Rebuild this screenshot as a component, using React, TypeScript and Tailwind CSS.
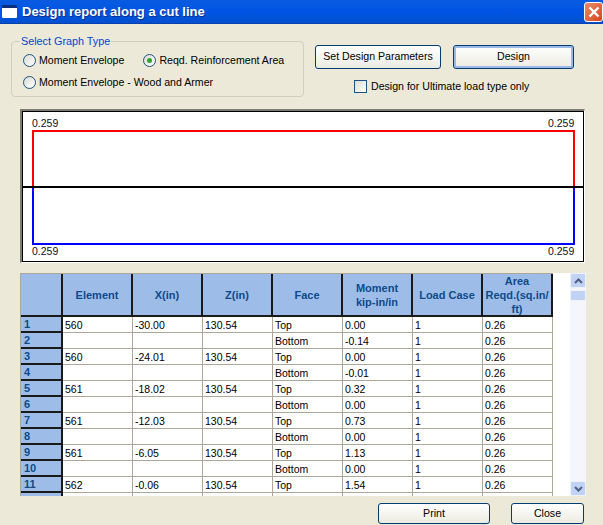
import React from "react";

const rows: [string, string, string, string, string, string, string, string][] = [
  ["1", "560", "-30.00", "130.54", "Top", "0.00", "1", "0.26"],
  ["2", "", "", "", "Bottom", "-0.14", "1", "0.26"],
  ["3", "560", "-24.01", "130.54", "Top", "0.00", "1", "0.26"],
  ["4", "", "", "", "Bottom", "-0.01", "1", "0.26"],
  ["5", "561", "-18.02", "130.54", "Top", "0.32", "1", "0.26"],
  ["6", "", "", "", "Bottom", "0.00", "1", "0.26"],
  ["7", "561", "-12.03", "130.54", "Top", "0.73", "1", "0.26"],
  ["8", "", "", "", "Bottom", "0.00", "1", "0.26"],
  ["9", "561", "-6.05", "130.54", "Top", "1.13", "1", "0.26"],
  ["10", "", "", "", "Bottom", "0.00", "1", "0.26"],
  ["11", "562", "-0.06", "130.54", "Top", "1.54", "1", "0.26"],
  ["", "", "", "", "", "", "", ""],
];

const gridCols = "grid grid-cols-[42px_70px_70px_70px_70px_70px_70px_70px]";

function Radio({ checked, label }: { checked?: boolean; label: string }) {
  return (
    <label className="flex items-center gap-[3px] whitespace-nowrap text-[10.6px] leading-[14px] text-black">
      <span className="flex h-[13px] w-[13px] items-center justify-center rounded-full border border-[#1d5281] bg-gradient-to-br from-[#dcdcd2] to-white">
        {checked && <span className="h-[5px] w-[5px] rounded-full bg-[#2fa52f]" />}
      </span>
      {label}
    </label>
  );
}

function Btn({ label, cls }: { label: string; cls: string }) {
  return (
    <button className={`flex items-center justify-center whitespace-nowrap rounded-[3px] border border-[#003c74] bg-gradient-to-b from-white to-[#ecebe2] text-[10.6px] text-black ${cls}`}>
      {label}
    </button>
  );
}

function Head({ children }: { children?: React.ReactNode }) {
  return (
    <div className="flex h-[43px] items-center justify-center border-r-2 border-b-2 border-[#1a1a1a] bg-[#9dbde8] text-center text-[11px] font-bold leading-[14px] text-[#0f4a8a]">
      {children}
    </div>
  );
}

function Cell({ children }: { children?: React.ReactNode }) {
  return (
    <div className="h-[16px] overflow-hidden border-r border-b border-[#aca899] bg-white pl-[2px] text-[10.5px] leading-[16px] text-black">
      {children}
    </div>
  );
}

function Arrow({ up }: { up?: boolean }) {
  return (
    <div className="flex h-[15px] w-[16px] items-center justify-center rounded-[2px] border border-[#eef3fb] bg-[#c1d2f5]">
      <svg width="9" height="6" viewBox="0 0 9 6">
        <path d={up ? "M1 5 L4.5 1.5 L8 5" : "M1 1 L4.5 4.5 L8 1"} fill="none" stroke="#4d6185" strokeWidth="2" />
      </svg>
    </div>
  );
}

export default function App() {
  return (
    <div className="flex h-[525px] w-[603px] flex-col overflow-hidden bg-[#ece9d8] font-['Liberation_Sans',sans-serif]">
      <div className="flex h-[24px] shrink-0 items-center justify-between border-b border-[#0a3fb0] bg-gradient-to-b from-[#0a5be0] via-[#0054e3] to-[#0250d0] pl-[2px]">
        <div className="flex items-center gap-[5px]">
          <div className="h-[13px] w-[15px] rounded-[1px] border-t-[3px] border-[#0b2f7c] bg-white" />
          <span className="text-[13px] font-bold text-white [text-shadow:1px_1px_0_#0a2f90]">Design report along a cut line</span>
        </div>
        <div className="flex h-[20px] w-[19px] items-center justify-center rounded-[3px] border border-white bg-gradient-to-br from-[#e98a68] to-[#d8431c]">
          <svg width="12" height="12" viewBox="0 0 12 12">
            <path d="M1.5 1.5 L10.5 10.5 M10.5 1.5 L1.5 10.5" stroke="#fff" strokeWidth="2.4" />
          </svg>
        </div>
      </div>

      <div className="flex h-[85px] shrink-0 pl-[11px] pt-[17px]">
        <div className="relative h-[56px] w-[293px] rounded-[4px] border border-[#d0d0bf] pl-[11px] pt-[11px]">
          <span className="absolute left-[8px] top-[-8px] bg-[#ece9d8] px-[1px] text-[10.8px] leading-[14px] text-[#0046d5]">Select Graph Type</span>
          <div className="flex items-center gap-[19px]">
            <Radio label="Moment Envelope" />
            <Radio checked label="Reqd. Reinforcement Area" />
          </div>
          <div className="mt-[8px]">
            <Radio label="Moment Envelope - Wood and Armer" />
          </div>
        </div>
        <div className="ml-[11px] flex flex-col pt-[4px]">
          <div className="flex gap-[12px]">
            <Btn label="Set Design Parameters" cls="h-[24px] w-[126px]" />
            <Btn label="Design" cls="h-[24px] w-[121px] shadow-[inset_0_0_0_2px_#9db8e6]" />
          </div>
          <div className="ml-[39px] mt-[10px] flex items-center gap-[4px] whitespace-nowrap text-[10.6px] leading-[14px] text-black">
            <span className="h-[13px] w-[13px] border border-[#1d5281] bg-gradient-to-br from-[#dcdcd2] to-white" />
            Design for Ultimate load type only
          </div>
        </div>
      </div>

      <div className="ml-[20px] h-[154px] w-[565px] shrink-0 border-t-[2px] border-r border-b border-l-[2px] border-t-[#7f7c70] border-r-white border-b-white border-l-[#7f7c70]">
        <svg width="562" height="151" viewBox="0 0 560 149" className="block border border-black bg-white">
          <text x="9" y="15" fontSize="10.5" fill="#111">0.259</text>
          <text x="525" y="15" fontSize="10.5" fill="#111">0.259</text>
          <rect x="10" y="19" width="541" height="56" fill="none" stroke="#ff0000" strokeWidth="2" />
          <rect x="10" y="75" width="541" height="57" fill="none" stroke="#0000ff" strokeWidth="2" />
          <line x1="0" y1="75" x2="560" y2="75" stroke="#000" strokeWidth="2" />
          <text x="9" y="143" fontSize="10.5" fill="#111">0.259</text>
          <text x="525" y="143" fontSize="10.5" fill="#111">0.259</text>
        </svg>
      </div>

      <div className="ml-[20px] mt-[10px] flex h-[223px] w-[566px] shrink-0 overflow-hidden">
        <div className="w-[533px] shrink-0 border-t border-l border-[#aca899]">
          <div className={gridCols}>
            <Head />
            <Head>Element</Head>
            <Head>X(in)</Head>
            <Head>Z(in)</Head>
            <Head>Face</Head>
            <Head>Moment<br />kip-in/in</Head>
            <Head>Load Case</Head>
            <Head>Area<br />Reqd.(sq.in/<br />ft)</Head>
          </div>
          {rows.map((r, n) => (
            <div key={n} className={gridCols}>
              <div className="h-[16px] border-r-2 border-b-2 border-[#1a1a1a] bg-[#9dbde8] pl-[3px] text-[11px] font-bold leading-[15px] text-[#0f4a8a]">{r[0]}</div>
              {r.slice(1).map((v, i) => (
                <Cell key={i}>{v}</Cell>
              ))}
            </div>
          ))}
        </div>
        <div className="w-[17px] shrink-0 bg-white" />
        <div className="flex w-[16px] shrink-0 flex-col bg-[#f4f6fc]">
          <Arrow up />
          <div className="mt-[2px] h-[11px] w-[16px] rounded-[2px] border border-[#eef3fb] bg-[#c1d2f5]" />
          <div className="flex-1" />
          <Arrow />
        </div>
      </div>

      <div className="ml-[378px] mt-[7px] flex gap-[21px]">
        <Btn label="Print" cls="h-[21px] w-[112px]" />
        <Btn label="Close" cls="h-[21px] w-[73px]" />
      </div>
    </div>
  );
}
